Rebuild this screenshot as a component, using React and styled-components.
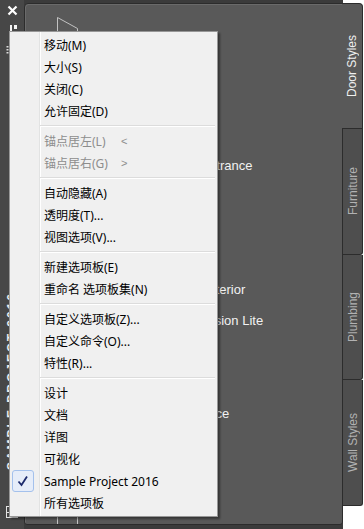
import React from "react";
import styled, { createGlobalStyle } from "styled-components";

const GlobalStyle = createGlobalStyle`
  html, body {
    margin: 0;
    padding: 0;
    background: #ffffff;
  }
`;

const Frame = styled.div`
  position: relative;
  display: flex;
  width: 364px;
  height: 529px;
  overflow: hidden;
  background: #ffffff;
`;

/* left title strip */
const Sidebar = styled.div`
  flex: none;
  width: 24px;
  display: flex;
  flex-direction: column;
  padding: 5px 0 11px;
  box-sizing: border-box;
  background: #474747;
`;

const SideIcon = styled.svg`
  display: block;
  flex: none;
  margin-left: ${(p) => p.$left}px;
  margin-top: ${(p) => p.$top}px;
`;

const SideTitle = styled.div`
  margin: auto 0 0 5px;
  writing-mode: vertical-rl;
  transform: rotate(180deg);
  font-family: "Liberation Sans", Arial, sans-serif;
  font-size: 12px;
  font-weight: bold;
  letter-spacing: 2px;
  line-height: 14px;
  color: #ececec;
  white-space: nowrap;
`;

/* palette body */
const PanelArea = styled.div`
  flex: 1;
  min-width: 0;
  display: flex;
  padding: 3px 0 4px;
  background: #3b3b3b;
`;

const Panel = styled.div`
  flex: 1;
  overflow: hidden;
  padding-top: 22px;
  background: #595959;
  border: 1px solid #2c2c2c;
  border-radius: 4px 0 3px 3px;
  box-shadow: inset 1px 1px 0 #6a6a6a;
`;

const PaletteRow = styled.div`
  display: flex;
  align-items: center;
  gap: 14px;
  height: 31px;
  padding-left: 30px;
`;

const DoorThumb = styled.svg`
  flex: none;
  display: block;
`;

const ItemLabel = styled.span`
  font-family: "Liberation Sans", Arial, sans-serif;
  font-size: 13px;
  color: #f2f2f2;
  white-space: nowrap;
`;

/* tabs on the right */
const TabColumn = styled.div`
  flex: none;
  width: 22px;
  margin-left: -1px;
  padding-top: 3px;
  display: flex;
  flex-direction: column;
`;

const Tab = styled.div`
  box-sizing: border-box;
  width: 21px;
  height: ${(p) => p.$h}px;
  display: flex;
  align-items: center;
  justify-content: center;
  background: ${(p) => (p.$active ? "#595959" : "#4e4e4e")};
  border: 1px solid #2c2c2c;
  border-left: ${(p) => (p.$active ? "none" : "1px solid #2c2c2c")};
  border-top: ${(p) => (p.$active ? "1px solid #2c2c2c" : "none")};
  border-radius: ${(p) => (p.$active ? "0 4px 0 0" : "0 0 3px 0")};
  color: ${(p) => (p.$active ? "#f0f0f0" : "#b2b2b2")};
`;

const TabText = styled.span`
  writing-mode: vertical-rl;
  transform: rotate(180deg);
  font-family: "Liberation Sans", Arial, sans-serif;
  font-size: 12px;
  white-space: nowrap;
`;

/* context menu */
const Menu = styled.div`
  position: absolute;
  left: 9px;
  top: 31px;
  width: 209px;
  box-sizing: border-box;
  padding: 2px;
  border: 1px solid #979797;
  background: linear-gradient(
    to right,
    #f0f0f0 0 29px,
    #e2e3e3 29px 30px,
    #ffffff 30px 31px,
    #f0f0f0 31px
  );
  box-shadow: 2px 2px 2px rgba(0, 0, 0, 0.4);
  font-family: "Noto Sans", "Noto Sans CJK SC", sans-serif;
  font-size: 12px;
`;

const MenuItem = styled.div`
  display: flex;
  align-items: center;
  height: 22px;
  color: ${(p) => (p.$disabled ? "#8d8d8d" : "#000000")};
  white-space: nowrap;
`;

const CheckCell = styled.div`
  flex: none;
  width: 32px;
  height: 22px;
`;

const CheckBox = styled.div`
  box-sizing: border-box;
  width: 22px;
  height: 22px;
  display: flex;
  align-items: center;
  justify-content: center;
  background: #e6edf9;
  border: 1px solid #a4c1ec;
  border-radius: 3px;
`;

const Label = styled.span`
  min-width: ${(p) => p.$min || 0}px;
`;

const Shortcut = styled.span`
  font-family: "Liberation Sans", Arial, sans-serif;
  font-size: 11px;
  color: #8d8d8d;
`;

const MenuSeparator = styled.div`
  height: 8px;
  margin-left: 28px;
  display: flex;
  align-items: center;
  &::before {
    content: "";
    flex: 1;
    height: 1px;
    background: #dcdcdc;
    border-bottom: 1px solid #ffffff;
  }
`;

const paletteItems = [
  "Bifold - Double",
  "Hinged - Single",
  "Hinged - Double",
  "Pocket - Single",
  "Hinged - Double - Entrance",
  "Revolving",
  "Sliding - Double",
  "Overhead - Garage",
  "Hinged - Double - Exterior",
  "Hinged - Double – Vision Lite",
  "Sliding - Single",
  "Pivot - Single",
  "Hinged - Single - Office",
  "Bifold - Single",
  "Opening",
  "Revolving - Round",
];

const tabs = [
  { name: "Door Styles", h: 126, active: true },
  { name: "Furniture", h: 126 },
  { name: "Plumbing", h: 125 },
  { name: "Wall Styles", h: 126 },
];

const menu = [
  { label: "移动(M)" },
  { label: "大小(S)" },
  { label: "关闭(C)" },
  { label: "允许固定(D)" },
  "sep",
  { label: "锚点居左(L)", key: "<", disabled: true },
  { label: "锚点居右(G)", key: ">", disabled: true },
  "sep",
  { label: "自动隐藏(A)" },
  { label: "透明度(T)..." },
  { label: "视图选项(V)..." },
  "sep",
  { label: "新建选项板(E)" },
  { label: "重命名 选项板集(N)" },
  "sep",
  { label: "自定义选项板(Z)..." },
  { label: "自定义命令(O)..." },
  { label: "特性(R)..." },
  "sep",
  { label: "设计" },
  { label: "文档" },
  { label: "详图" },
  { label: "可视化" },
  { label: "Sample Project 2016", checked: true },
  { label: "所有选项板" },
];

const DoorIcon = () => (
  <DoorThumb width="26" height="50" viewBox="0 0 26 50">
    <g fill="none" stroke="#c2c2c2" strokeWidth="1">
      <path d="M2.5 0.5 L2.5 48.5" />
      <path d="M2.5 0.5 L22.5 11.5 L22.5 44.5 L2.5 48.5" />
    </g>
  </DoorThumb>
);

const App = () => {
  return (
    <>
      <GlobalStyle />
      <Frame>
        <Sidebar>
          <SideIcon $left={7} $top={0} width="11" height="11" viewBox="0 0 11 11">
            <path d="M1.5 1.5 L9.5 9.5 M9.5 1.5 L1.5 9.5" stroke="#ffffff" strokeWidth="2.2" />
          </SideIcon>
          <SideIcon $left={10} $top={9} width="8" height="8" viewBox="0 0 8 8">
            <path d="M0 0 H2 V6 H7 V8 H0 Z M4 0 H7 V4 H4 Z" fill="#f2f2f2" />
          </SideIcon>
          <SideIcon $left={6} $top={13} width="3" height="8" viewBox="0 0 3 8">
            <rect x="0.5" y="0" width="2" height="1.5" fill="#dcdcdc" />
            <rect x="0.5" y="3" width="2" height="1.5" fill="#dcdcdc" />
            <rect x="0.5" y="6" width="2" height="1.5" fill="#dcdcdc" />
          </SideIcon>
          <SideTitle>SAMPLE PROJECT 2016</SideTitle>
          <SideIcon $left={6} $top={36} width="12" height="12" viewBox="0 0 12 12">
            <g fill="none" stroke="#e4e4e4" strokeWidth="1">
              <rect x="0.5" y="0.5" width="11" height="11" />
              <path d="M0.5 6.5 H11.5 M6.5 0.5 V11.5 M3 9 H5" />
            </g>
          </SideIcon>
        </Sidebar>

        <PanelArea>
          <Panel>
            {paletteItems.map((name, i) => (
              <PaletteRow key={i}>
                <DoorIcon />
                <ItemLabel>{name}</ItemLabel>
              </PaletteRow>
            ))}
          </Panel>
        </PanelArea>

        <TabColumn>
          {tabs.map((t) => (
            <Tab key={t.name} $h={t.h} $active={t.active}>
              <TabText>{t.name}</TabText>
            </Tab>
          ))}
        </TabColumn>

        <Menu>
          {menu.map((m, i) =>
            m === "sep" ? (
              <MenuSeparator key={i} />
            ) : (
              <MenuItem key={i} $disabled={m.disabled}>
                <CheckCell>
                  {m.checked && (
                    <CheckBox>
                      <svg width="12" height="12" viewBox="0 0 12 12">
                        <path
                          d="M1.5 6.5 L4.5 10 L10 1.5"
                          fill="none"
                          stroke="#1c2a6c"
                          strokeWidth="1.8"
                        />
                      </svg>
                    </CheckBox>
                  )}
                </CheckCell>
                <Label $min={m.key ? 77 : 0}>{m.label}</Label>
                {m.key && <Shortcut>{m.key}</Shortcut>}
              </MenuItem>
            )
          )}
        </Menu>
      </Frame>
    </>
  );
};

export default App;
